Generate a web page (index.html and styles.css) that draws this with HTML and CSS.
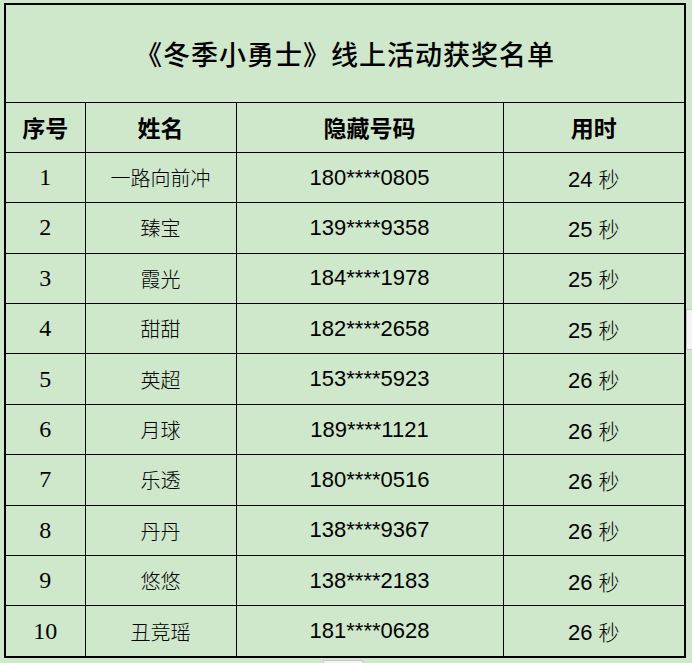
FILE: index.html
```html
<!DOCTYPE html>
<html lang="zh-CN">
<head>
<meta charset="utf-8">
<link rel="stylesheet" href="styles.css">
</head>
<body>
<div class="sheet">
<table class="list">
  <colgroup>
    <col class="c1"><col class="c2"><col class="c3"><col class="c4">
  </colgroup>
  <tr class="title-row"><td colspan="4" class="title">《冬季小勇士》线上活动获奖名单</td></tr>
  <tr class="head"><td>序号</td><td>姓名</td><td>隐藏号码</td><td>用时</td></tr>
  <tr><td class="no">1</td><td class="name">一路向前冲</td><td class="phone">180****0805</td><td class="time">24 <span class="s">秒</span></td></tr>
  <tr><td class="no">2</td><td class="name">臻宝</td><td class="phone">139****9358</td><td class="time">25 <span class="s">秒</span></td></tr>
  <tr><td class="no">3</td><td class="name">霞光</td><td class="phone">184****1978</td><td class="time">25 <span class="s">秒</span></td></tr>
  <tr><td class="no">4</td><td class="name">甜甜</td><td class="phone">182****2658</td><td class="time">25 <span class="s">秒</span></td></tr>
  <tr><td class="no">5</td><td class="name">英超</td><td class="phone">153****5923</td><td class="time">26 <span class="s">秒</span></td></tr>
  <tr><td class="no">6</td><td class="name">月球</td><td class="phone">189****1121</td><td class="time">26 <span class="s">秒</span></td></tr>
  <tr><td class="no">7</td><td class="name">乐透</td><td class="phone">180****0516</td><td class="time">26 <span class="s">秒</span></td></tr>
  <tr><td class="no">8</td><td class="name">丹丹</td><td class="phone">138****9367</td><td class="time">26 <span class="s">秒</span></td></tr>
  <tr><td class="no">9</td><td class="name">悠悠</td><td class="phone">138****2183</td><td class="time">26 <span class="s">秒</span></td></tr>
  <tr><td class="no">10</td><td class="name">丑竞瑶</td><td class="phone">181****0628</td><td class="time">26 <span class="s">秒</span></td></tr>
</table>
<div class="tab-right"></div>
<div class="tab-bottom"></div>
</div>
</body>
</html>
```

FILE: styles.css
```css
html, body {
  margin: 0;
  padding: 0;
  background: #cfe7cb;
}
.sheet {
  position: relative;
  width: 692px;
  height: 663px;
  overflow: hidden;
  padding: 3px 0 0 4px;
  box-sizing: border-box;
}
.list {
  border-collapse: collapse;
  table-layout: fixed;
  width: 680px;
  border: 2px solid #000;
  color: #000;
}
.c1 { width: 80px; }
.c2 { width: 151px; }
.c3 { width: 267px; }
.c4 { width: 182px; }
.list td {
  border: 1px solid #000;
  text-align: center;
  vertical-align: middle;
  padding: 0;
  height: 49.4px;
  font-family: "Noto Sans CJK SC", sans-serif;
}
.title-row td {
  height: 96.5px;
}
.title {
  font-size: 27px;
  font-weight: 500;
  letter-spacing: 1px;
}
.head td {
  font-size: 23px;
  font-weight: 700;
}
.list td.no {
  font-family: "Liberation Serif", "Times New Roman", serif;
  font-size: 24px;
}
.list td.name {
  font-size: 20px;
  font-weight: 300;
}
.list td.phone, .list td.time {
  font-family: "Liberation Sans", Arial, sans-serif;
  font-size: 22px;
}
.s {
  font-family: "Noto Sans CJK SC", sans-serif;
  font-size: 21px;
  font-weight: 300;
}
.tab-right {
  position: absolute;
  left: 686px;
  top: 309px;
  width: 8px;
  height: 41px;
  background: #f4f4f4;
  border: 1px solid #c8c8c8;
  box-sizing: border-box;
}
.tab-bottom {
  position: absolute;
  left: 323px;
  top: 660px;
  width: 40px;
  height: 8px;
  background: #f4f4f4;
  border: 1px solid #c8c8c8;
  box-sizing: border-box;
}
```
